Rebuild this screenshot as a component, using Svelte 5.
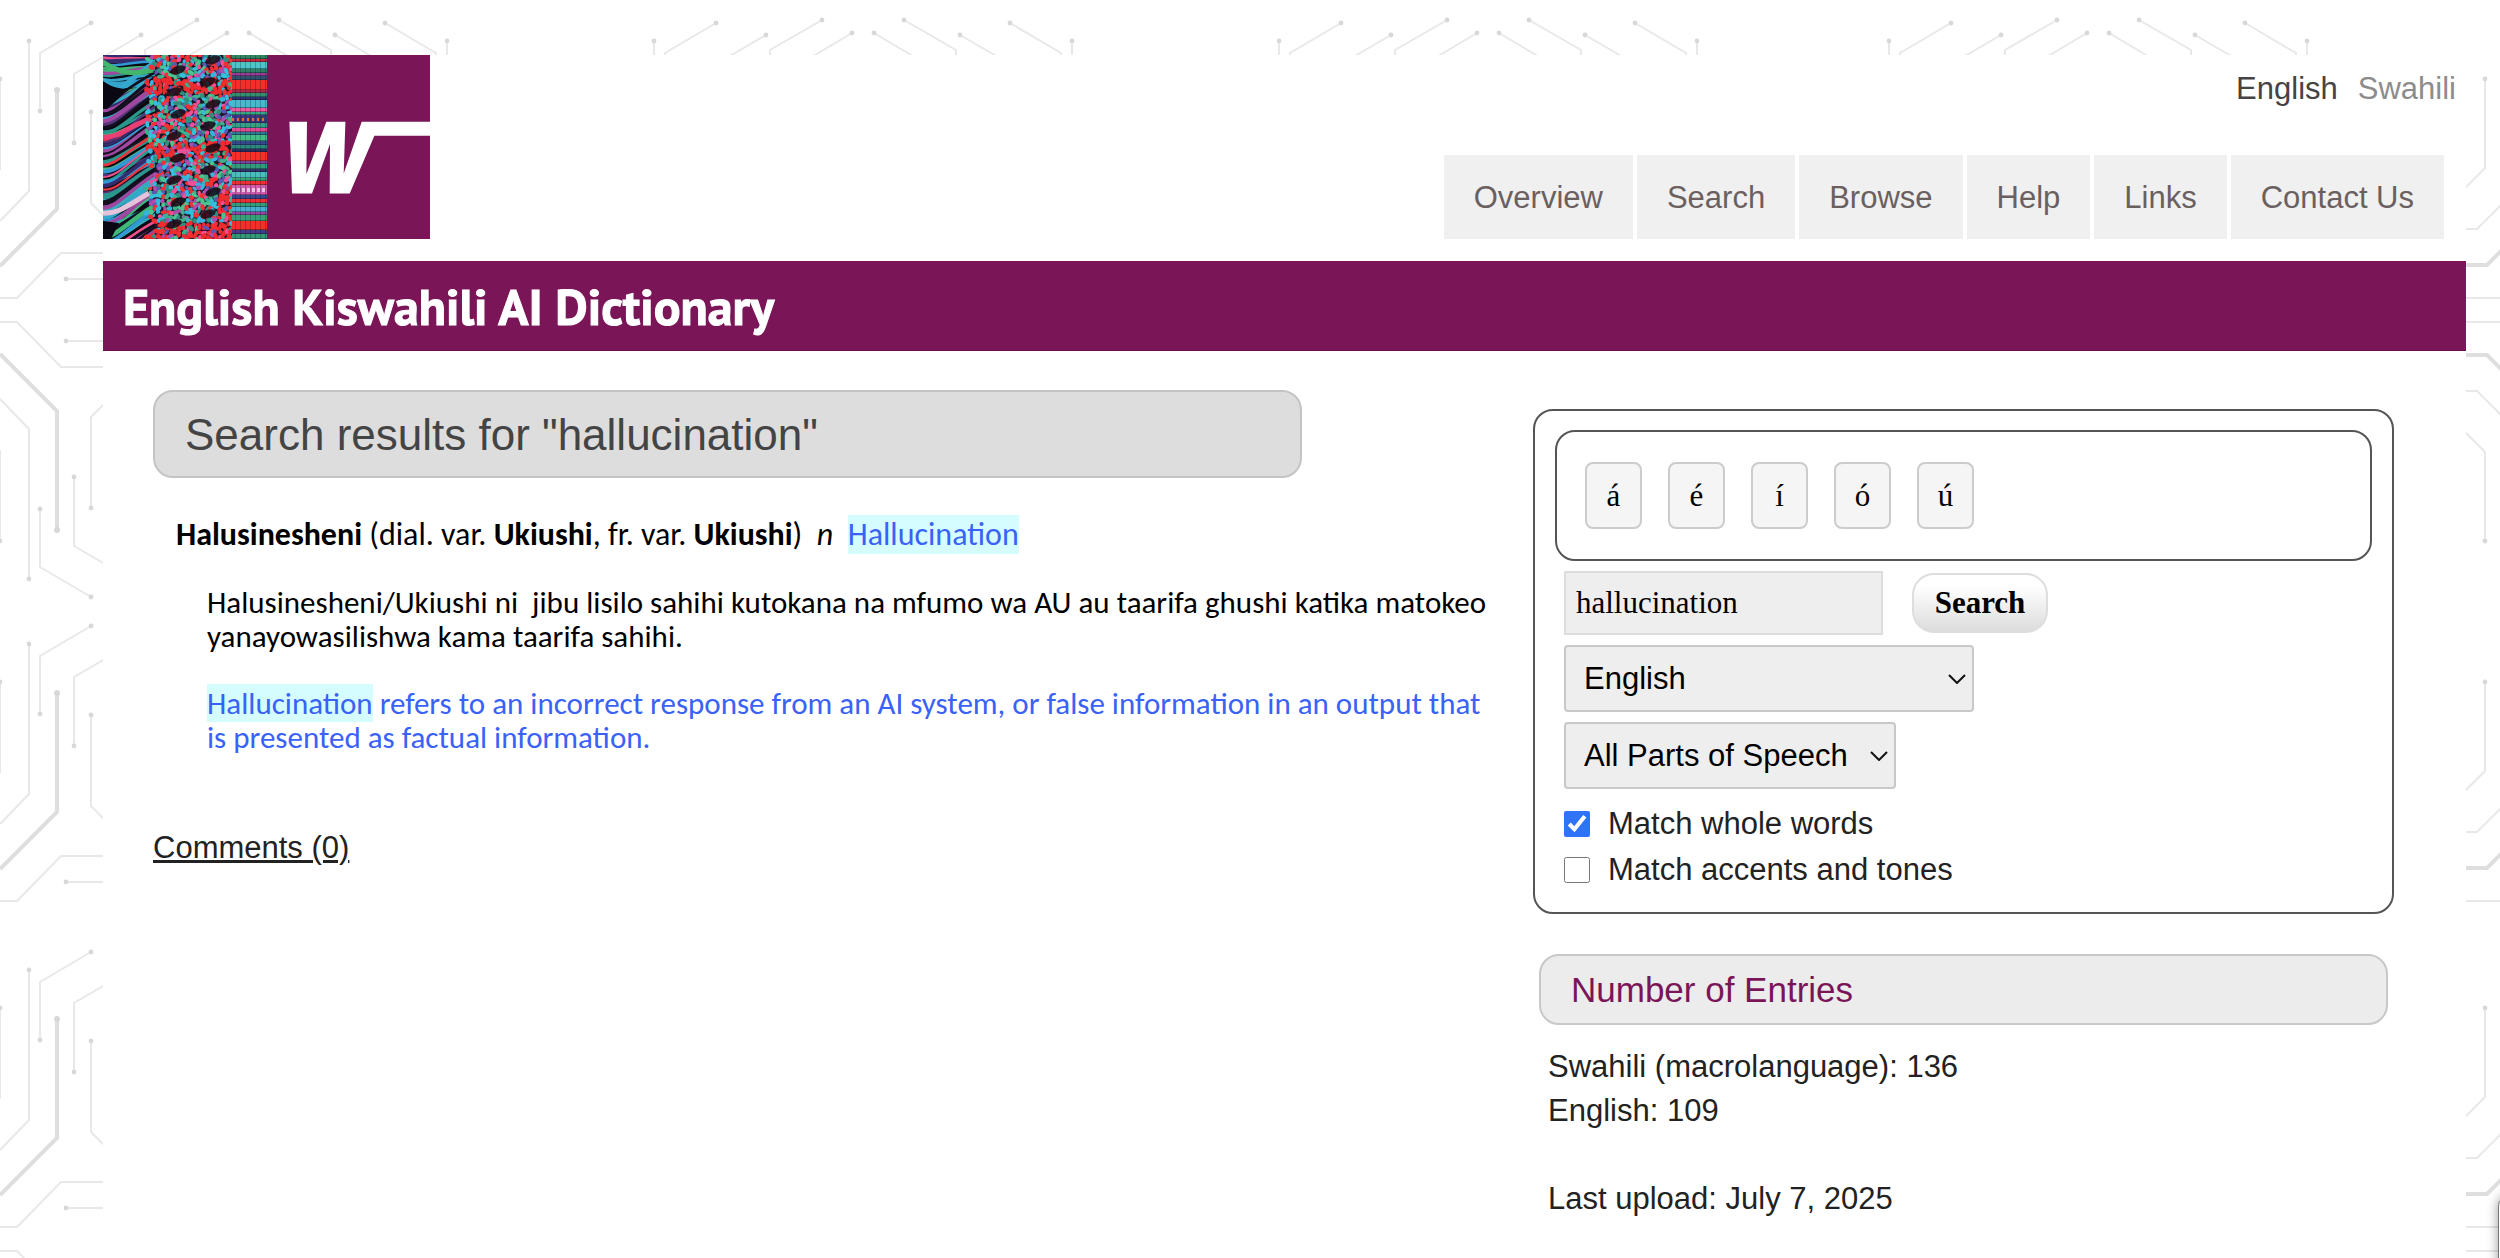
<script>
  const nav = ['Overview', 'Search', 'Browse', 'Help', 'Links', 'Contact Us'];
  const accents = ['á', 'é', 'í', 'ó', 'ú'];

  let query = $state('hallucination');
  let wholeWords = $state(true);
  let matchAccents = $state(false);

  // Circuit background: one tile of traces, repeated over the page.
  const tilesX = [0, 625, 1250, 1860];
  const tilesY = [0, 603, 929];
  const half = [
    { d: 'M0 79V170', n: [[0, 79]] },
    { d: 'M29 41V191L0 221', n: [[29, 41]] },
    { d: 'M57 90V209L0 266', n: [[57, 90]], w: true },
    { d: 'M40 111V53L91 23', n: [[40, 111], [91, 23]] },
    { d: 'M74 143V74L141 35', n: [[74, 143], [141, 35]] },
    { d: 'M91 112V203L141 253', n: [[91, 112]] },
    { d: 'M0 298H17L61 253H120', n: [] },
    { d: 'M66 279H120', n: [[66, 279]] },
    { d: 'M145 60V50L197 20', n: [[197, 20]] },
    { d: 'M185 58L227 33', n: [[227, 33]] },
    { d: 'M331 60V50L279 20', n: [[279, 20]] },
    { d: 'M291 58L249 33', n: [[249, 33]] },
    { d: 'M373 57L335 35', n: [[335, 35]] },
    { d: 'M436 60V53L385 23', n: [[385, 23]] },
    { d: 'M447 41V60', n: [[447, 41]] },
    { d: 'M625 79V168L600 193', n: [[625, 79]] },
    { d: 'M600 229H617L645 201', n: [] },
    { d: 'M600 265H627L650 242', n: [], w: true },
    { d: 'M600 298H640', n: [] }
  ];

  // Woven cloth in the logo.
  let seed = 11;
  function rnd() {
    seed = (seed * 16807) % 2147483647;
    return seed / 2147483647;
  }
  const yarn = ['#35c0dc', '#3fb08a', '#f03034', '#35b5dd', '#4cc48e', '#f0509a', '#5a58b4', '#f23232', '#2f9080', '#b04cae'];
  const strandInk = ['#3fb878', '#a0479f', '#352c70', '#e83540', '#35abc0', '#3098d4', '#12101f', '#ee5088', '#46bd7c', '#553579', '#2b968c', '#34a8cc'];

  const strands = Array.from({ length: 74 }, (_, i) => {
    const y = -14 + i * 2.9;
    const lift = y < 30 ? 8 - rnd() * 10 : -16 - rnd() * 18;
    return {
      d: `M-4 ${y + 8} C12 ${y + 10 + rnd() * 6} 28 ${y + lift / 2 + 4} 56 ${y + lift + 4}`,
      c: strandInk[Math.floor(rnd() * strandInk.length)],
      w: 2 + rnd() * 3
    };
  });

  const knots = [];
  for (let y = 1; y < 186; y += 4) {
    for (let x = 44; x < 131; x += 4) {
      const edge = 50 + Math.sin(y / 8) * 6;
      if (x < edge && rnd() < 0.6) continue;
      const redZone = (y > 22 && y < 38) || (y > 86 && y < 104) || y > 168 || (x > 112 && y > 140);
      knots.push({
        x: x + rnd() * 3 - 1,
        y: y + rnd() * 3 - 1,
        r: rnd() * 180,
        a: 2.2 + rnd() * 1.6,
        b: 1.6 + rnd() * 0.9,
        c: redZone && rnd() < 0.6 ? '#ee2c30' : yarn[Math.floor(rnd() * yarn.length)]
      });
    }
  }
  const holes = [];
  for (let i = 0; i < 8; i++) {
    holes.push([75 - (i % 2) * 4, 15 + i * 22]);
    holes.push([110 - (i % 2) * 5, 5 + i * 22]);
  }

  const stripes = [
    [0, 4, '#30845f'], [4, 3, '#c32b3d'], [7, 7, '#4cc4c8'], [14, 4, '#2b8066'], [18, 3, '#9a3c98'], [21, 4, '#31506c'],
    [25, 10, '#f42e28'], [35, 3, '#a52d48'], [38, 4, '#338f70'], [42, 3, '#333070'], [45, 8, '#48b8cc'], [53, 4, '#ee5a9e'],
    [57, 3, '#3aa583'], [60, 8, '#3c3880'], [68, 5, '#35a085'], [73, 4, '#e04c94'], [77, 3, '#2c7c90'], [80, 6, '#44bc86'],
    [86, 4, '#34488c'], [90, 4, '#2c887c'], [94, 3, '#2e2c60'], [97, 9, '#f43028'], [106, 3, '#7a459c'], [109, 5, '#339c7c'],
    [114, 3, '#34346c'], [117, 6, '#4abebc'], [123, 3, '#3aa574'], [126, 4, '#ee3034'], [130, 10, '#d05cae'], [140, 4, '#38448c'],
    [144, 4, '#ee3034'], [148, 4, '#339c7c'], [152, 5, '#46aed0'], [157, 3, '#9a44a0'], [160, 6, '#38a078'], [166, 9, '#f42e28'],
    [175, 4, '#443c88'], [179, 5, '#339874']
  ];
</script>

<svg class="circuit" aria-hidden="true">
  <defs>
    <g id="half">
      {#each half as t}
        <path d={t.d} class:wide={t.w} />
        {#each t.n as [cx, cy]}<circle {cx} {cy} r={t.w ? 3 : 2.4} />{/each}
      {/each}
    </g>
    <g id="tile">
      <use href="#half" />
      <use href="#half" transform="matrix(1 0 0 -1 0 620)" />
    </g>
    <clipPath id="upper"><rect x="-4" y="0" width="660" height="316" /></clipPath>
  </defs>
  {#each tilesX as x}
    {#each tilesY as y}
      <g transform="translate({x} {y})">
        {#if y === 603}
          <g clip-path="url(#upper)"><use href="#half" /></g>
        {:else}
          <use href="#tile" />
        {/if}
      </g>
    {/each}
  {/each}
</svg>

<div class="page">
  <header>
    <a class="logo" href="#home" aria-label="Home">
      <svg viewBox="0 0 327 184" width="327" height="184">
        <rect width="327" height="184" fill="#7a1658" />
        <svg width="164" height="184">
          <rect width="164" height="184" fill="#0b0a12" />
          {#each strands as s}
            <path d={s.d} fill="none" stroke={s.c} stroke-width={s.w} />
          {/each}
          <path d="M-2 158C14 160 26 150 46 138" stroke="#e6c3da" stroke-width="5" fill="none" />
          <path d="M-2 6C10 14 24 22 50 15" stroke="#44b56c" stroke-width="5" fill="none" />
          <path d="M-2 82C16 84 26 70 48 64" stroke="#ea3f74" stroke-width="5" fill="none" />
          <path d="M0 26C8 32 16 34 26 34L4 54H0Z" fill="#0a0812" />
          <path d="M0 166L16 168L8 184H0Z" fill="#0a0812" />
          <rect x="52" width="76" height="184" fill="#1b1828" />
          {#each knots as k}
            <ellipse rx={k.a} ry={k.b} fill={k.c} transform="translate({k.x} {k.y}) rotate({k.r})" />
          {/each}
          {#each holes as [x, y]}
            <ellipse rx="8" ry="4" fill="#150b14" opacity="0.85" transform="translate({x} {y}) rotate(-20)" />
          {/each}
          {#each stripes as [y, h, c]}
            <rect x="129" {y} width="35" height={h} fill={c} />
            <rect x="129" y={y + h - 1} width="35" height="1" fill="#0d1024" opacity="0.4" />
          {/each}
          {#each [132, 137, 142, 147, 152, 157, 162] as x}
            <rect {x} y="0" width="1" height="184" fill="#0d1024" opacity="0.25" />
            <rect x={x - 3} y="63" width="2" height="3" fill="#f06a28" />
            <rect x={x - 3} y="133" width="3" height="4" fill="#ecc4e2" />
          {/each}
        </svg>
        <path fill="#fff" d="M186.400 66.700H204L203.400 119L223.400 66.700H242.400L240.700 118.400L258.700 66.700H327V80.700H271.400L246.700 138.400H226.700L227 89L209 138.400H189Z" />
      </svg>
    </a>
    <div class="tools">
      <div class="langs">
        <a class="current" href="#en">English</a>
        <a href="#sw">Swahili</a>
      </div>
      <nav>
        {#each nav as item}<a href="#{item}">{item}</a>{/each}
      </nav>
    </div>
  </header>

  <h1>English Kiswahili AI Dictionary</h1>

  <div class="content">
    <main>
      <h2>Search results for "hallucination"</h2>
      <article>
        <p class="entry"><b>Halusinesheni</b> (dial. var. <b>Ukiushi</b>, fr. var. <b>Ukiushi</b>)&nbsp; <i>n</i>&nbsp; <span class="en"><mark>Hallucination</mark></span></p>
        <p class="def">Halusinesheni/Ukiushi ni&nbsp; jibu lisilo sahihi kutokana na mfumo wa AU au taarifa ghushi katika matokeo yanayowasilishwa kama taarifa sahihi.</p>
        <p class="def en"><mark>Hallucination</mark> refers to an incorrect response from an AI system, or false information in an output that is presented as factual information.</p>
      </article>
      <a class="comments" href="#comments">Comments (0)</a>
    </main>

    <aside>
      <form onsubmit={(e) => e.preventDefault()}>
        <div class="keys">
          {#each accents as ch}
            <button type="button" onclick={() => (query += ch)}>{ch}</button>
          {/each}
        </div>
        <div class="fields">
          <div class="row">
            <input class="query" type="text" aria-label="Search term" bind:value={query} />
            <button class="go" type="submit">Search</button>
          </div>
          <div class="select lang">
            <select aria-label="Language"><option>English</option><option>Swahili</option></select>
            <svg viewBox="0 0 18 10" aria-hidden="true"><path d="M1 1L9 9L17 1" /></svg>
          </div>
          <div class="select pos">
            <select aria-label="Part of speech"><option>All Parts of Speech</option></select>
            <svg viewBox="0 0 18 10" aria-hidden="true"><path d="M1 1L9 9L17 1" /></svg>
          </div>
          <div class="checks">
            <label><input type="checkbox" bind:checked={wholeWords} />Match whole words</label>
            <label><input type="checkbox" bind:checked={matchAccents} />Match accents and tones</label>
          </div>
        </div>
      </form>

      <section>
        <h3>Number of Entries</h3>
        <p>Swahili (macrolanguage): 136<br />English: 109</p>
        <p>Last upload: July 7, 2025</p>
      </section>
    </aside>
  </div>
</div>
<div class="flyout" aria-hidden="true"></div>

<style>
  :global(html),
  :global(body),
  :global(#app) {
    height: 100%;
  }
  :global(body) {
    background: #fff;
    font-family: 'Liberation Sans', Arial, sans-serif;
    font-size: 31px;
    color: #222;
    overflow-x: hidden;
  }
  * {
    box-sizing: border-box;
  }
  a {
    text-decoration: none;
  }
  .circuit {
    position: fixed;
    inset: 0;
    width: 100%;
    height: 100%;
    z-index: -1;
  }
  .circuit path {
    fill: none;
    stroke: #e8e8e8;
    stroke-width: 2;
  }
  .circuit path.wide {
    stroke: #dedede;
    stroke-width: 4;
  }
  .circuit circle {
    fill: #d8d8d8;
  }
  .page {
    margin: 0 34px 0 103px;
    min-height: 100%;
    border-top: 55px solid transparent;
    background: #fff;
    background-clip: padding-box;
  }
  header {
    display: flex;
    justify-content: space-between;
    height: 206px;
  }
  .logo svg {
    display: block;
  }
  .tools {
    display: flex;
    flex-direction: column;
    align-items: flex-end;
    justify-content: space-between;
    padding: 16px 0 22px;
  }
  .langs {
    display: flex;
    gap: 20px;
    padding-right: 10px;
    line-height: 36px;
  }
  .langs a {
    color: #8c8c8c;
  }
  .langs .current {
    color: #444;
  }
  nav {
    display: flex;
    gap: 4px;
    padding-right: 22px;
  }
  nav a {
    padding: 2px 30px 0;
    line-height: 82px;
    background: #f0f0f0;
    color: #6b6060;
  }
  h1 {
    margin: 0;
    padding: 2px 20px 0;
    background: #7a1658;
    border-bottom: 1px solid #6b0a4a;
    color: #fff;
    font: bold 50px/87px 'PT Sans', Carlito, Lato, sans-serif;
    -webkit-text-stroke: 1px #fff;
  }
  .content {
    display: flex;
    justify-content: space-between;
    padding: 39px 72px 0 50px;
  }
  main {
    width: 1346px;
  }
  h2 {
    width: 1149px;
    margin: 0 0 40px;
    padding: 2px 30px 0;
    border: 2px solid #c4c4c4;
    border-radius: 20px;
    background: #ddd;
    color: #444;
    font-size: 44px;
    font-weight: normal;
    line-height: 82px;
  }
  article {
    padding-left: 23px;
    color: #000;
    font: 31px/34px Carlito, Calibri, Lato, sans-serif;
  }
  article p {
    margin: 0 0 33px;
  }
  .entry {
    font-size: 32px;
  }
  .def {
    padding-left: 31px;
  }
  .en,
  .en mark {
    color: #3a62f6;
  }
  mark {
    background: #d5fdff;
  }
  .comments {
    display: inline-block;
    margin-top: 43px;
    color: #222;
    text-decoration: underline;
  }
  aside {
    width: 861px;
    padding-top: 19px;
  }
  form {
    padding: 19px 20px;
    border: 2px solid #555;
    border-radius: 20px;
  }
  .keys {
    display: flex;
    gap: 26px;
    padding: 30px 28px;
    border: 2px solid #555;
    border-radius: 20px;
  }
  .keys button {
    width: 57px;
    height: 67px;
    padding: 0;
    border: 2px solid #ccc;
    border-radius: 8px;
    background: #f5f5f5;
    color: #000;
    font: 31px 'Liberation Serif', serif;
  }
  .fields {
    display: flex;
    flex-direction: column;
    gap: 10px;
    padding: 10px 9px 0;
  }
  .row {
    display: flex;
    align-items: center;
    gap: 29px;
  }
  .query {
    width: 319px;
    height: 64px;
    padding: 0 10px;
    border: 2px solid #ddd;
    background: #eee;
    color: #000;
    font: 31px 'Liberation Serif', serif;
  }
  .go {
    width: 136px;
    height: 60px;
    padding: 0;
    border: 2px solid #ddd;
    border-radius: 22px;
    background: linear-gradient(#fff 20%, #dcdcdc);
    color: #000;
    font: bold 31px 'Liberation Serif', serif;
  }
  .select {
    position: relative;
  }
  .lang {
    width: 410px;
  }
  .pos {
    width: 332px;
  }
  select {
    display: block;
    width: 100%;
    height: 67px;
    padding: 0 18px;
    appearance: none;
    border: 2px solid #c8c8c8;
    border-radius: 4px;
    background: #eee;
    color: #000;
    font: 31px 'Liberation Sans', Arial, sans-serif;
  }
  .select svg {
    position: absolute;
    right: 8px;
    top: 29px;
    width: 18px;
    height: 10px;
    pointer-events: none;
  }
  .select path {
    fill: none;
    stroke: #111;
    stroke-width: 2;
  }
  .checks {
    padding: 2px 0 0;
  }
  label {
    display: flex;
    align-items: center;
    gap: 18px;
    line-height: 46px;
  }
  label input {
    width: 26px;
    height: 26px;
    margin: 0;
    accent-color: #2f73f6;
  }
  section {
    padding: 40px 6px 0;
  }
  h3 {
    margin: 0 0 20px;
    padding: 0 30px;
    border: 2px solid #c8c8c8;
    border-radius: 20px;
    background: #ececec;
    color: #7a1658;
    font-size: 35px;
    font-weight: normal;
    line-height: 67px;
  }
  section p {
    margin: 0 0 44px;
    padding-left: 9px;
    line-height: 44px;
  }
  .flyout {
    position: fixed;
    right: -18px;
    bottom: -20px;
    width: 20px;
    height: 82px;
    border: 1px solid #777;
    border-radius: 10px;
    background: #fff;
    box-shadow: 0 0 12px rgba(0, 0, 0, 0.4);
  }
</style>
